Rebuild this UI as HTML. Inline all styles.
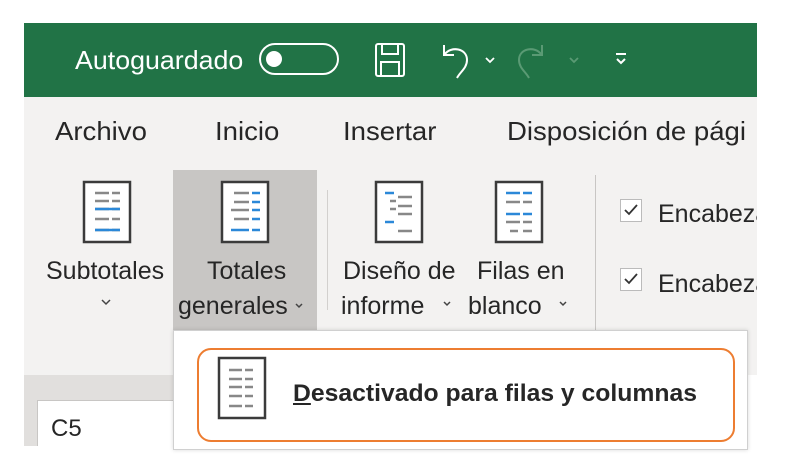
<!DOCTYPE html>
<html><head><meta charset="utf-8"><style>
*{margin:0;padding:0;box-sizing:border-box}
body{width:787px;height:472px;background:#fff;position:relative;overflow:hidden;font-family:"Liberation Sans",sans-serif;color:#262626}
.a{position:absolute;white-space:nowrap;line-height:1}
.t{font-size:26px;transform:scaleX(1.06);transform-origin:left center}
.l{font-size:25px;transform:scaleX(1.0);transform-origin:left center}
</style></head><body>
<div class="a" style="left:24px;top:23px;width:733px;height:74px;background:#217346"></div>
<div class="a" style="left:75px;top:47px;color:#fff;font-size:26px;transform:scaleX(1.03);transform-origin:left center">Autoguardado</div>
<div class="a" style="left:259px;top:43px;width:80px;height:32px;border:2px solid #fff;border-radius:16px"></div>
<div class="a" style="left:266px;top:51px;width:16px;height:16px;border-radius:50%;background:#fff"></div>
<svg class="a" style="left:370px;top:40px" width="260" height="40" viewBox="0 0 260 40" fill="none" stroke="#fff" stroke-width="2">
<rect x="6" y="4" width="28" height="32" rx="2"/><rect x="12" y="4" width="16" height="10"/><rect x="11" y="22" width="18" height="14"/>
<path d="M74 5v10h10M75 14c6-8 22-6 22 6 0 8-7 12-10 18"/>
<path d="M116 18l4 4 4-4" stroke-width="1.8"/>
<path d="M172 5v10h-10M171 14c-6-8-22-6-22 6 0 8 7 12 10 18" stroke="#5a9a74"/>
<path d="M200 18l4 4 4-4" stroke="#5a9a74" stroke-width="1.8"/>
<path d="M250 14h10M251 19l4 4 4-4" transform="translate(-4,0)"/>
</svg>
<div class="a" style="left:24px;top:97px;width:733px;height:278px;background:#f3f2f1"></div>
<div class="a" style="left:24px;top:375px;width:149px;height:71px;background:#e1dfdd"></div>
<div class="a" style="left:37px;top:400px;width:136px;height:46px;background:#fff;border:1px solid #c8c6c4;border-right:none;border-bottom:none"></div>
<div class="a" style="left:51px;top:417px;font-size:24px">C5</div>
<div class="a t" style="left:55px;top:118px">Archivo</div>
<div class="a t" style="left:215px;top:118px">Inicio</div>
<div class="a t" style="left:343px;top:118px">Insertar</div>
<div class="a t" style="left:507px;top:118px">Disposición de pági</div>
<div class="a" style="left:173px;top:170px;width:144px;height:160px;background:#c8c6c4"></div>
<div class="a" style="left:327px;top:190px;width:1px;height:120px;background:#d2d0ce"></div>
<div class="a" style="left:595px;top:175px;width:1px;height:160px;background:#c8c6c4"></div>
<svg class="a" style="left:0;top:0" width="787" height="472" fill="none">
<g stroke-width="2.5">
<rect x="84" y="182" width="46" height="60" fill="#fff" stroke="#3b3b3b"/>
<path d="M95 193h14M112 193h8M95 201h14M112 201h8M95 209h14M112 209h8M95 219h14M112 219h8M95 230h14M112 230h8" stroke="#888"/>
<path d="M95 209h25M95 230h25" stroke="#2b88d8"/>
<rect x="222" y="182" width="46" height="60" fill="#fff" stroke="#3b3b3b"/>
<path d="M234 193h15M234 202h15M231 210h18M234 219h15" stroke="#888"/>
<path d="M252 193h8M252 202h8M252 210h8M252 219h8M231 230h18M252 230h8" stroke="#2b88d8"/>
<rect x="376" y="182" width="46" height="60" fill="#fff" stroke="#3b3b3b"/>
<path d="M385 193h9M385 222h9" stroke="#2b88d8"/>
<path d="M398 197h14M398 206h14M398 214h14M398 231h14" stroke="#888"/><path d="M390 201h6M390 209h6" stroke="#888"/>
<rect x="496" y="182" width="46" height="60" fill="#fff" stroke="#3b3b3b"/>
<path d="M506 193h14M523 193h9M506 214h14M523 214h9" stroke="#2b88d8"/>
<path d="M506 202h14M523 202h9M506 222h14M523 222h9M510 231h8M523 231h9" stroke="#888"/>
</g>
<g stroke="#444" stroke-width="1.5"><path d="M102 300l4 4 4-4M296 304l3 3 3-3M444 302l3 3 3-3M560 302l3 3 3-3"/></g>
<rect x="620.5" y="199.5" width="21" height="22" fill="#fff" stroke="#bbb"/>
<rect x="620.5" y="268.5" width="21" height="22" fill="#fff" stroke="#bbb"/>
<path d="M625 210l4 4 8-9M625 279l4 4 8-9" stroke="#333" stroke-width="1.8"/>
</svg>
<div class="a l" style="left:46px;top:259px">Subtotales</div>
<div class="a l" style="left:207px;top:259px">Totales</div>
<div class="a l" style="left:178px;top:294px">generales</div>
<div class="a l" style="left:343px;top:259px">Diseño de</div>
<div class="a l" style="left:341px;top:294px">informe</div>
<div class="a l" style="left:477px;top:259px">Filas en</div>
<div class="a l" style="left:468px;top:294px">blanco</div>
<div class="a l" style="left:658px;top:202px">Encabeza</div>
<div class="a l" style="left:658px;top:272px">Encabeza</div>
<div class="a" style="left:173px;top:330px;width:575px;height:120px;background:#fff;border:1px solid #d0d0d0;box-shadow:0 0 4px rgba(0,0,0,.15)"></div>
<div class="a" style="left:197px;top:348px;width:538px;height:94px;border:2px solid #ed7d31;border-radius:14px"></div>
<svg class="a" style="left:216px;top:355px" width="52" height="66" fill="none" stroke-width="2.5">
<rect x="3" y="3" width="46" height="60" fill="#fff" stroke="#3b3b3b"/>
<path d="M13 15h13M29 15h8M13 24h13M29 24h8M13 32h13M29 32h8M13 41h13M29 41h8M13 51h13M29 51h8" stroke="#888"/>
</svg>
<div class="a" style="left:293px;top:382px;font-size:24px;font-weight:bold;color:#262626;transform:scaleX(1.03);transform-origin:left center"><u>D</u>esactivado para filas y columnas</div>
<div class="a" style="left:757px;top:0;width:30px;height:472px;background:#fff"></div>
</body></html>
